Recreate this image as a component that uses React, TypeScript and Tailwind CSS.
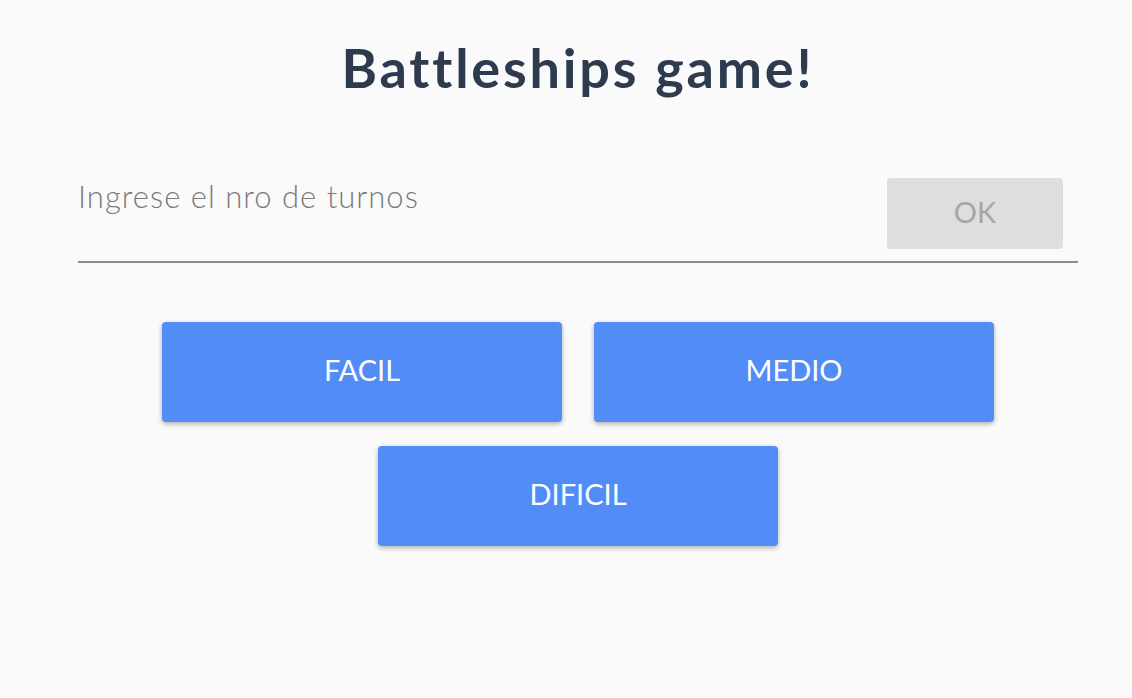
export default function App() {
  const font = { fontFamily: "Lato, 'Noto Sans', sans-serif" };
  return (
    <div className="min-h-[698px] w-full bg-[#fafafa] pl-[78px] pr-[54px]" style={font}>
      <h1 className="pt-[30px] text-center text-[54px] font-bold leading-[76px] tracking-[2.8px] text-[#2e3b4f]">
        Battleships game!
      </h1>

      <div className="mt-[72px] flex items-start border-b-2 border-[#8c8c8c] pb-[12px]">
        <label className="-mt-[2px] flex-1 text-[31px] font-light leading-[40px] tracking-[1px] text-[#7a7a7a]">
          Ingrese el nro de turnos
        </label>
        <button className="mr-[15px] h-[71px] w-[176px] rounded-[4px] bg-[#dedede] pb-[3px] text-[29px] text-[#a6a6a6]">
          OK
        </button>
      </div>

      <div className="mt-[59px] flex flex-col items-center gap-[24px]">
        <div className="flex gap-[32px]">
          <button className="h-[100px] w-[400px] rounded-[4px] bg-[#528cf7] pb-[4px] text-[29px] text-white shadow-[0_2px_5px_rgba(0,0,0,0.3)]">
            FACIL
          </button>
          <button className="h-[100px] w-[400px] rounded-[4px] bg-[#528cf7] pb-[4px] text-[29px] text-white shadow-[0_2px_5px_rgba(0,0,0,0.3)]">
            MEDIO
          </button>
        </div>
        <button className="h-[100px] w-[400px] rounded-[4px] bg-[#528cf7] pb-[4px] text-[29px] text-white shadow-[0_2px_5px_rgba(0,0,0,0.3)]">
          DIFICIL
        </button>
      </div>
    </div>
  );
}
